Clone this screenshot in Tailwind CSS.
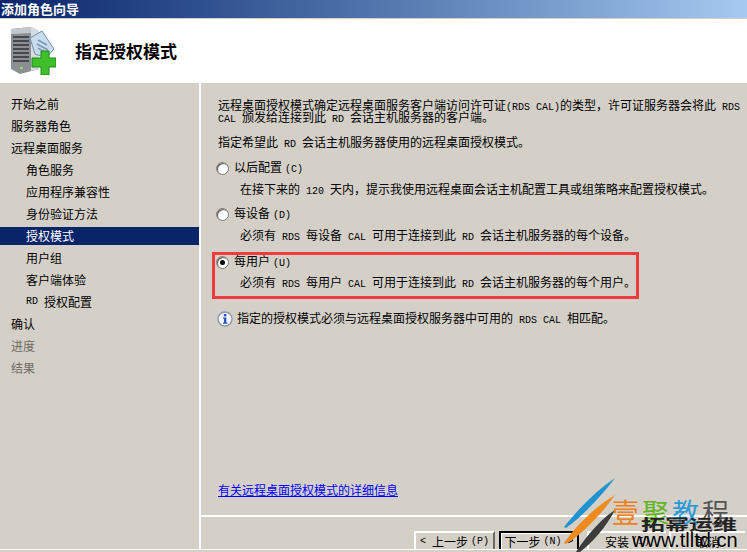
<!DOCTYPE html>
<html lang="zh-CN">
<head>
  <meta charset="UTF-8">
  <title>添加角色向导</title>
  <script src="https://cdn.jsdelivr.net/npm/@tailwindcss/browser@4"></script>
</head>
<body class="relative w-[747px] h-[552px] overflow-hidden bg-[#d4d0c8] text-black text-[12px] leading-[12px] font-['Noto_Sans_CJK_SC',sans-serif]">
  <!-- title bar -->
  <div class="h-[18px] pl-px flex items-center text-white font-bold text-[13px] bg-gradient-to-r from-[#0a246a] to-[#a6caf0]">添加角色向导</div>

  <!-- header -->
  <div class="h-[65px] bg-white border-t border-[#d4d0c8] flex items-center pl-[10px]">
    <svg width="46" height="50" viewBox="0 0 46 50" class="mt-[-3px]">
      <path d="M1 4 L21 2 L29 6 L29 44 L10 49 L1 44 Z" fill="#8b8f94"/>
      <path d="M1 4 L21 2 L21 8 L1 9 Z" fill="#c3c8cc"/>
      <path d="M21 2 L29 6 L29 44 L21 46 Z" fill="#d9dcde"/>
      <path d="M3 12 H19 M3 16 H19 M3 20 H19 M3 24 H19 M3 28 H19 M3 32 H19 M3 36 H19" stroke="#45494e" stroke-width="2"/>
      <rect x="10" y="42" width="3" height="2" fill="#8fe04a"/>
      <path d="M20 13 L32 6 L44 24 L36 33 L25 29 Z" fill="#c9dcee" stroke="#6f8faf"/>
      <path d="M28 15 L37 20 M27 19 L38 25 M28 23 L36 28" stroke="#7d97b5" stroke-width="1.5"/>
      <path d="M31 26 H39 V33 H46 V42 H39 V50 H31 V42 H22 V33 H31 Z" fill="#3fbf2b" stroke="#1d8a1a"/>
    </svg>
    <div class="ml-[19px] text-[17px] leading-[20px] font-bold mb-[1px]">指定授权模式</div>
  </div>

  <div class="flex h-[469px]">
    <!-- wizard steps -->
    <div class="w-[199px] pt-[12px] flex flex-col gap-[4px] text-[12px]">
      <div class="h-[18px] pl-[11px] flex items-center">开始之前</div>
      <div class="h-[18px] pl-[11px] flex items-center">服务器角色</div>
      <div class="h-[18px] pl-[11px] flex items-center">远程桌面服务</div>
      <div class="h-[18px] pl-[26px] flex items-center">角色服务</div>
      <div class="h-[18px] pl-[26px] flex items-center">应用程序兼容性</div>
      <div class="h-[18px] pl-[26px] flex items-center">身份验证方法</div>
      <div class="h-[18px] pl-[26px] flex items-center bg-[#0a246a] text-white">授权模式</div>
      <div class="h-[18px] pl-[26px] flex items-center">用户组</div>
      <div class="h-[18px] pl-[26px] flex items-center">客户端体验</div>
      <div class="h-[18px] pl-[26px] flex items-center whitespace-pre"><span class="font-['Liberation_Mono'] text-[10px]">RD </span>授权配置</div>
      <div class="h-[18px] pl-[11px] flex items-center">确认</div>
      <div class="h-[18px] pl-[11px] flex items-center text-[#6f6b62]">进度</div>
      <div class="h-[18px] pl-[11px] flex items-center text-[#6f6b62]">结果</div>
    </div>

    <!-- content -->
    <div class="w-[548px] border-l-2 border-white flex flex-col">
      <div class="h-[432px] pl-[17px] pt-[16px] relative">
        <p class="h-[12px] whitespace-pre">远程桌面授权模式确定远程桌面服务客户端访问许可证<span class="font-['Liberation_Mono'] text-[10px]">(RDS CAL)</span>的类型，许可证服务器会将此<span class="font-['Liberation_Mono'] text-[10px]"> RDS</span></p>
        <p class="h-[12px] whitespace-pre"><span class="font-['Liberation_Mono'] text-[10px]">CAL </span>颁发给连接到此<span class="font-['Liberation_Mono'] text-[10px]"> RD </span>会话主机服务器的客户端。</p>
        <p class="mt-[13px] h-[12px] whitespace-pre">指定希望此<span class="font-['Liberation_Mono'] text-[10px]"> RD </span>会话主机服务器使用的远程桌面授权模式。</p>

        <div class="mt-[12px] flex items-center h-[16px] -ml-[2px]">
          <span class="w-[13px] h-[13px] rounded-full bg-white border border-[#7b7a74] shadow-[inset_1px_1px_1px_#55534e]"></span>
          <span class="ml-[5px] whitespace-pre">以后配置<span class="ml-[3px] font-['Liberation_Mono'] text-[10px]">(C)</span></span>
        </div>
        <p class="mt-[6px] h-[14px] pl-[22px] leading-[14px] whitespace-pre">在接下来的<span class="font-['Liberation_Mono'] text-[10px]"> 120 </span>天内，提示我使用远程桌面会话主机配置工具或组策略来配置授权模式。</p>

        <div class="mt-[10px] flex items-center h-[16px] -ml-[2px]">
          <span class="w-[13px] h-[13px] rounded-full bg-white border border-[#7b7a74] shadow-[inset_1px_1px_1px_#55534e]"></span>
          <span class="ml-[5px] whitespace-pre">每设备<span class="ml-[3px] font-['Liberation_Mono'] text-[10px]">(D)</span></span>
        </div>
        <p class="mt-[6px] h-[14px] pl-[22px] leading-[14px] whitespace-pre">必须有<span class="font-['Liberation_Mono'] text-[10px]"> RDS </span>每设备<span class="font-['Liberation_Mono'] text-[10px]"> CAL </span>可用于连接到此<span class="font-['Liberation_Mono'] text-[10px]"> RD </span>会话主机服务器的每个设备。</p>

        <div class="mt-[12px] flex items-center h-[16px] -ml-[2px]">
          <span class="w-[13px] h-[13px] rounded-full bg-white border border-[#7b7a74] shadow-[inset_1px_1px_1px_#55534e] flex items-center justify-center"><span class="w-[5px] h-[5px] rounded-full bg-black"></span></span>
          <span class="ml-[5px] whitespace-pre">每用户<span class="ml-[3px] font-['Liberation_Mono'] text-[10px]">(U)</span></span>
        </div>
        <p class="mt-[5px] h-[14px] pl-[22px] leading-[14px] whitespace-pre">必须有<span class="font-['Liberation_Mono'] text-[10px]"> RDS </span>每用户<span class="font-['Liberation_Mono'] text-[10px]"> CAL </span>可用于连接到此<span class="font-['Liberation_Mono'] text-[10px]"> RD </span>会话主机服务器的每个用户。</p>

        <!-- red annotation round the selected option -->
        <div class="absolute left-[11px] top-[169px] w-[427px] h-[47px] border-[3px] border-[#ef3b3b]"></div>

        <div class="mt-[22px] flex items-center h-[16px] -ml-[1px]">
          <svg width="16" height="16" viewBox="0 0 16 16">
            <circle cx="8" cy="8" r="7" fill="#f4f6fb" stroke="#8d97ae" stroke-width="1.4"/>
            <rect x="6.8" y="3" width="2.6" height="2.4" fill="#2a55c4"/>
            <path d="M6 6.6 H9.3 V11.6 H10.4 V12.8 H6 V11.6 H7 V7.8 H6 Z" fill="#2a55c4"/>
          </svg>
          <span class="ml-[4px] whitespace-pre">指定的授权模式必须与远程桌面授权服务器中可用的<span class="font-['Liberation_Mono'] text-[10px]"> RDS CAL </span>相匹配。</span>
        </div>

        <a class="absolute left-[17px] top-[400px] text-[#0000ff] underline leading-[14px]">有关远程桌面授权模式的详细信息</a>
      </div>
      <!-- button row -->
      <div class="flex-1 border-t-2 border-white pl-[213px] pt-[14px] flex gap-[3px] whitespace-pre">
        <div class="w-[81px] h-[20px] mr-[1px] border-t-2 border-l-2 border-white border-r-2 border-r-[#6c6a64] flex items-center justify-center"><span class="font-['Liberation_Mono'] text-[10px]">&lt; </span>上一步<span class="ml-[3px] font-['Liberation_Mono'] text-[10px]">(P)</span></div>
        <div class="w-[80px] h-[20px] border-t-2 border-l-2 border-r-2 border-black flex items-center justify-center shadow-[inset_1px_1px_0_#fff]">下一步<span class="ml-[3px] font-['Liberation_Mono'] text-[10px]">(N) &gt;</span></div>
        <div class="w-[79px] h-[20px] ml-[5px] border-t-2 border-l-2 border-white flex items-center justify-center">安装<span class="ml-[3px] font-['Liberation_Mono'] text-[10px]">(I)</span></div>
        <div class="w-[76px] h-[20px] border-t-2 border-l-2 border-white flex items-center justify-center">取消</div>
      </div>
    </div>
  </div>

  <!-- bottom edge -->
  <div class="absolute left-0 top-[549px] w-full h-px bg-white"></div>
  <div class="absolute left-0 top-[550px] w-full h-[2px] bg-[#d4d0c8]"></div>

  <!-- watermark -->
  <svg class="absolute left-[560px] top-[475px]" width="70" height="77" viewBox="0 0 70 77">
    <path d="M4 52 C18 34 36 16 55 3 C42 20 24 40 6 53 Z" fill="#1f93d2"/>
    <path d="M4 68 C18 48 38 30 55 20 C42 38 24 58 6 69 Z" fill="#ef8a1d"/>
    <path d="M16 77 C28 58 44 42 55 35 C46 52 32 68 20 77 Z" fill="#3c3c3c"/>
  </svg>
  <div class="absolute left-[612px] top-[497px] flex tracking-[3px] text-[27px] leading-[30px]">
    <span class="text-[#ef7f1a]">壹</span><span class="text-[#63b51f]">聚</span><span class="text-[#2b9bd8]">教</span><span class="text-[#555555]">程</span>
  </div>
  <div class="absolute left-[641px] top-[512px] text-[24px] leading-[24px] font-bold scale-y-[0.62] text-[#222222]">拓幂运维</div>
  <div class="absolute left-[632px] top-[530px] text-[20px] leading-[20px] text-black font-['Liberation_Sans']">www.tlltd.cn</div>
</body>
</html>
